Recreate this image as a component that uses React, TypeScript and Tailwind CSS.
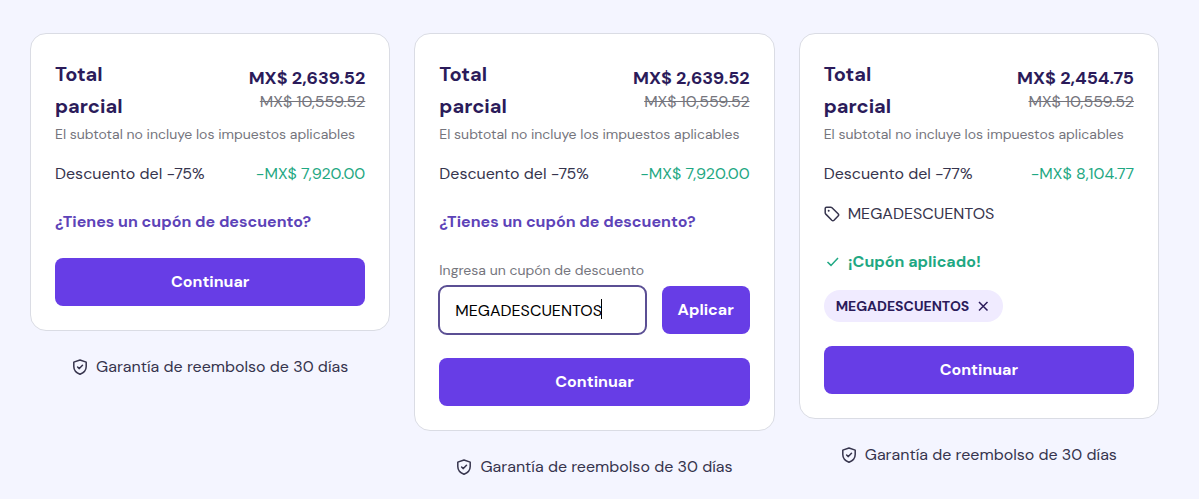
import React, { useId, useState } from "react";

type Summary = {
  total: string;
  discount: string;
  saved: string;
};

const ORIGINAL_PRICE = "MX$ 10,559.52";

const basePlan: Summary = {
  total: "MX$ 2,639.52",
  discount: "Descuento del -75%",
  saved: "-MX$ 7,920.00",
};

const couponPlan: Summary = {
  total: "MX$ 2,454.75",
  discount: "Descuento del -77%",
  saved: "-MX$ 8,104.77",
};

function ShieldIcon() {
  return (
    <svg width="16" height="16" viewBox="0 0 16 16" fill="none" stroke="currentColor" strokeWidth="1.5" strokeLinecap="round" strokeLinejoin="round" aria-hidden="true">
      <path d="M8 1 14.200 3.100V7.500C14.200 11.200 11.600 13.800 8 15.200 4.400 13.800 1.800 11.200 1.800 7.500V3.100Z" />
      <path d="m5.600 8 1.700 1.600 3.200-3.300" />
    </svg>
  );
}

function TagIcon() {
  return (
    <svg width="16" height="16" viewBox="0 0 16 16" fill="none" stroke="currentColor" strokeWidth="1.5" strokeLinejoin="round" aria-hidden="true">
      <path d="M1.200 2.500Q1.200 1.200 2.500 1.200H6.600Q7.400 1.200 8 1.800L14.100 7.800Q15.200 8.900 14.100 10L10 14.200Q8.900 15.200 7.800 14.200L1.800 8.100Q1.200 7.500 1.200 6.700Z" />
      <circle cx="4.700" cy="4.700" r="1" fill="currentColor" stroke="none" />
    </svg>
  );
}

function CheckIcon() {
  return (
    <svg width="16" height="16" viewBox="0 0 16 16" fill="none" stroke="currentColor" strokeWidth="1.5" aria-hidden="true">
      <path d="m3.500 8 3.500 3.400 7-7.400" />
    </svg>
  );
}

function CloseIcon() {
  return (
    <svg width="16" height="16" viewBox="0 0 16 16" fill="none" stroke="currentColor" strokeWidth="1.5" aria-hidden="true">
      <path d="m4 4 8.500 8.500M12.500 4 4 12.500" />
    </svg>
  );
}

function PriceCard({ summary, children }: { summary: Summary; children: React.ReactNode }) {
  return (
    <section className="min-w-0">
      <div className="rounded-2xl border border-[#dadce4] bg-white p-6">
        <div className="flex items-center justify-between">
          <h2 className="w-24 text-xl leading-8 font-bold text-[#2b1b5a]">Total parcial</h2>
          <div className="text-right">
            <p className="text-lg leading-6 font-bold text-[#2b1b5a]">{summary.total}</p>
            <p className="leading-6 text-[#75757d]">
              <s>{ORIGINAL_PRICE}</s>
            </p>
          </div>
        </div>
        <p className="text-sm leading-6 whitespace-nowrap text-[#75757d]">
          El subtotal no incluye los impuestos aplicables
        </p>
        <div className="mt-4 flex justify-between leading-6">
          <span>{summary.discount}</span>
          <span className="text-[#1fa883]">{summary.saved}</span>
        </div>
        {children}
        <button type="button" className="mt-6 h-12 w-full rounded-lg bg-[#673de6] font-bold text-white">
          Continuar
        </button>
      </div>
      <p className="mt-6 flex items-center justify-center gap-2 leading-6">
        <ShieldIcon />
        Garantía de reembolso de 30 días
      </p>
    </section>
  );
}

function CouponToggle() {
  return (
    <button type="button" className="mt-6 block leading-6 font-bold text-[#5d43b8]">
      ¿Tienes un cupón de descuento?
    </button>
  );
}

function CouponForm() {
  const id = useId();
  const [code, setCode] = useState("MEGADESCUENTOS");
  const [pristine, setPristine] = useState(true);

  return (
    <form className="mt-6" onSubmit={(e) => e.preventDefault()}>
      <label htmlFor={id} className="mb-1 block text-sm leading-6 text-[#75757d]">
        Ingresa un cupón de descuento
      </label>
      <div className="flex gap-4">
        <div className="relative min-w-0 flex-1">
          <input
            id={id}
            value={code}
            onFocus={() => setPristine(false)}
            onChange={(e) => setCode(e.target.value)}
            className="h-12 w-full rounded-lg bg-white px-4 text-black outline-2 -outline-offset-1 outline-[#5b4f94]"
          />
          {/* resting caret, replaced by the native one on focus */}
          {pristine && (
            <span className="pointer-events-none absolute top-[13px] left-[162px] h-5 w-px bg-black" />
          )}
        </div>
        <button type="submit" className="h-12 w-[88px] rounded-lg bg-[#673de6] font-bold text-white">
          Aplicar
        </button>
      </div>
    </form>
  );
}

function AppliedCoupon() {
  return (
    <>
      <p className="mt-4 flex items-center gap-2 leading-6">
        <TagIcon />
        MEGADESCUENTOS
      </p>
      <p className="mt-6 flex items-center gap-2 leading-6 font-bold text-[#1fa883]">
        <CheckIcon />
        ¡Cupón aplicado!
      </p>
      <div className="mt-4 flex">
        <span className="flex h-8 items-center gap-1.5 rounded-full bg-[#f0ebff] px-3 text-sm font-bold text-[#2b1b5a]">
          MEGADESCUENTOS
          <button type="button" aria-label="Quitar cupón">
            <CloseIcon />
          </button>
        </span>
      </div>
    </>
  );
}

export default function App() {
  return (
    <main className="grid min-h-screen grid-cols-3 items-start gap-6 bg-[#f4f5ff] pt-[33px] pr-10 pb-5 pl-[30px] font-['DM_Sans',Inter,sans-serif] text-base text-[#36344d]">
      <PriceCard summary={basePlan}>
        <CouponToggle />
      </PriceCard>
      <PriceCard summary={basePlan}>
        <CouponToggle />
        <CouponForm />
      </PriceCard>
      <PriceCard summary={couponPlan}>
        <AppliedCoupon />
      </PriceCard>
    </main>
  );
}
